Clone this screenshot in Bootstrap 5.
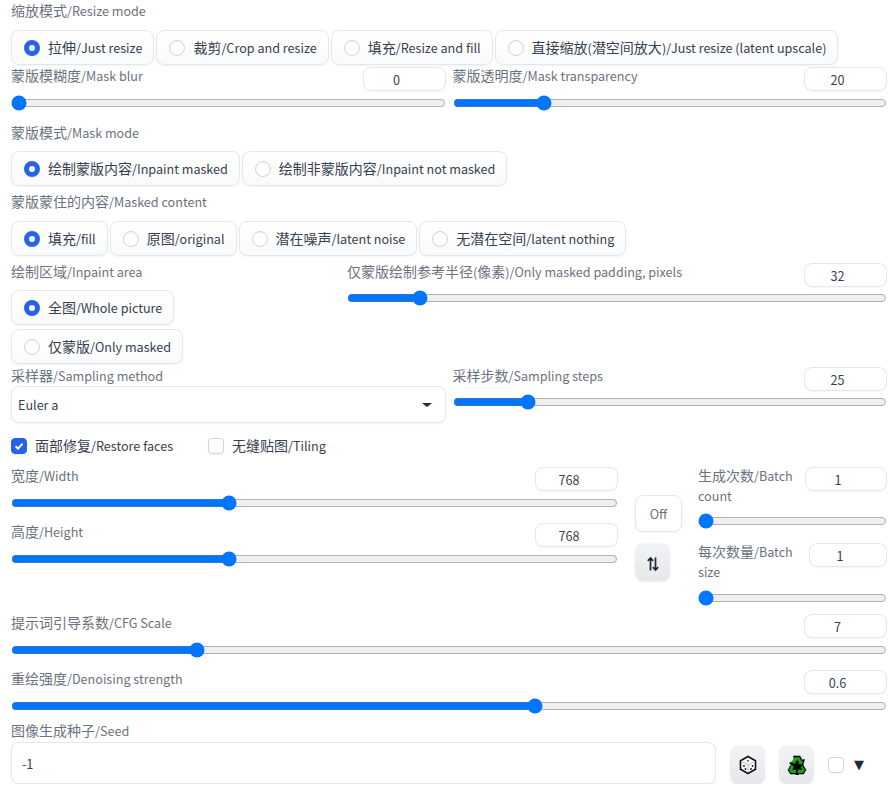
<!DOCTYPE html>
<html lang="zh">
<head>
<meta charset="utf-8">
<title>Inpaint settings</title>
<link rel="stylesheet" href="https://cdn.jsdelivr.net/npm/bootstrap@5.3.0/dist/css/bootstrap.min.css">
<style>
html,body{background:#fff;margin:0;overflow:hidden}
body{font-family:"Noto Sans CJK SC","Noto Sans",sans-serif;font-size:12.6px;line-height:20px;color:#374151}
.zh{font-size:14px;line-height:1}
.panel{padding:1px 9.5px 0 11px;width:896px}
.lbl{color:#6b7280;line-height:20px;display:block;margin:0}
.chip{display:flex;align-items:center;gap:8px;height:35px;padding:0 11px 0 12px;border:1px solid #e5e7eb;border-radius:8px;background:linear-gradient(#fff,#f9fafb);box-shadow:0 1px 2px rgba(0,0,0,.05);margin:0;white-space:nowrap;width:fit-content}
.chips{margin-top:8px}
.chips9{margin-top:9px}
.chip4{margin-top:4px}
.dot{width:16px;height:16px;border-radius:50%;border:1px solid #d1d5db;background:#fff;box-shadow:inset 0 1px 2px rgba(0,0,0,.05);flex:none;margin:0}
.dot.on{border:5px solid #2563eb}
.ml2{margin-left:2px}
.nbox{width:83px;height:24px;padding:0 12px;font-size:12.6px;line-height:20px;color:#374151;border:1px solid #e5e7eb;border-radius:8px;text-align:center;background:#fff;box-shadow:0 1px 2px rgba(0,0,0,.04);margin-top:1px;flex:none}
.sld{display:block;width:100%;height:16px;margin:4px 0 0;padding:0}
.half{width:434.5px;flex:none}
.half2{width:434px;flex:none}
.colgap{gap:7px}
.lgap{gap:8px}
.sblk{height:48px}
.sel{height:37px;border:1px solid #e5e7eb;border-radius:8px;padding:0 13px 0 6px;background:#fff;box-shadow:0 1px 2px rgba(0,0,0,.05)}
.caret{width:0;height:0;border-left:5px solid transparent;border-right:5px solid transparent;border-top:4px solid #1f2937}
.cks{height:16px;width:16px;border:1px solid #d1d5db;border-radius:4px;background:#fff;flex:none;box-shadow:0 1px 2px rgba(0,0,0,.05)}
.cks.on{background:#2563eb;border-color:#2563eb}
.offb{width:47px;height:37px;border:1px solid #e5e7eb;border-radius:8px;background:#fff;color:#6b7280;padding:0;font-size:12.6px;box-shadow:0 1px 2px rgba(0,0,0,.05)}
.toolb{width:35px;height:38px;border:0;border-radius:8px;background:linear-gradient(#f3f4f6,#e5e7eb);padding:0;box-shadow:0 1px 2px rgba(0,0,0,.08)}
.seedin{height:42px;width:705px;border:1px solid #e5e7eb;border-radius:8px;padding:0 10px;font-size:12.6px;color:#374151;background:#fff;box-shadow:0 1px 2px rgba(0,0,0,.05);flex:none}
.tri{font-size:13px;line-height:16px;color:#1f2937;font-family:"DejaVu Sans",sans-serif;margin:3px 0 0 10px}
.leftc{width:607px;flex:none}
.midc{width:47px;flex:none;padding-top:29px;gap:11px;margin-left:17px}
.rightc{width:188.5px;flex:none;margin-left:16px}
.b1{width:82px}.b2{width:78px}
.sld2{margin-top:7px}
.sld3{margin-top:8px}
.sldt{margin-top:3px}
.area-l{width:336px;flex:none}
.tb{margin:3px 0 0 14px}
.tb2{height:39px}
.rsp{margin-top:13px}
</style>
</head>
<body>
<div class="panel">
  <span class="lbl"><span class="zh">缩放模式</span>/Resize mode</span>
  <div class="chips9 d-flex">
    <label class="chip"><span class="dot on"></span><span><span class="zh">拉伸</span>/Just resize</span></label>
    <label class="chip ml2"><span class="dot"></span><span><span class="zh">裁剪</span>/Crop and resize</span></label>
    <label class="chip ml2"><span class="dot"></span><span><span class="zh">填充</span>/Resize and fill</span></label>
    <label class="chip ml2"><span class="dot"></span><span><span class="zh">直接缩放</span>(<span class="zh">潜空间放大</span>)/Just resize (latent upscale)</span></label>
  </div>

  <div class="d-flex colgap sblk" style="margin-top:1px">
    <div class="half">
      <div class="d-flex justify-content-between"><span class="lbl"><span class="zh">蒙版模糊度</span>/Mask blur</span><input class="nbox" type="number" value="0"></div>
      <input class="sld" type="range" min="0" max="64" value="0">
    </div>
    <div class="half2">
      <div class="d-flex justify-content-between"><span class="lbl"><span class="zh">蒙版透明度</span>/Mask transparency</span><input class="nbox" type="number" value="20"></div>
      <input class="sld" type="range" min="0" max="100" value="20">
    </div>
  </div>

  <span class="lbl" style="margin-top:9px"><span class="zh">蒙版模式</span>/Mask mode</span>
  <div class="chips d-flex">
    <label class="chip"><span class="dot on"></span><span><span class="zh">绘制蒙版内容</span>/Inpaint masked</span></label>
    <label class="chip ml2"><span class="dot"></span><span><span class="zh">绘制非蒙版内容</span>/Inpaint not masked</span></label>
  </div>

  <span class="lbl" style="margin-top:6px"><span class="zh">蒙版蒙住的内容</span>/Masked content</span>
  <div class="chips9 d-flex">
    <label class="chip"><span class="dot on"></span><span><span class="zh">填充</span>/fill</span></label>
    <label class="chip ml2"><span class="dot"></span><span><span class="zh">原图</span>/original</span></label>
    <label class="chip ml2"><span class="dot"></span><span><span class="zh">潜在噪声</span>/latent noise</span></label>
    <label class="chip ml2"><span class="dot"></span><span><span class="zh">无潜在空间</span>/latent nothing</span></label>
  </div>

  <div class="d-flex" style="margin-top:6px">
    <div class="area-l">
      <span class="lbl"><span class="zh">绘制区域</span>/Inpaint area</span>
      <label class="chip chips"><span class="dot on"></span><span><span class="zh">全图</span>/Whole picture</span></label>
      <label class="chip chip4"><span class="dot"></span><span><span class="zh">仅蒙版</span>/Only masked</span></label>
    </div>
    <div class="flex-grow-1">
      <div class="d-flex justify-content-between"><span class="lbl"><span class="zh">仅蒙版绘制参考半径</span>(<span class="zh">像素</span>)/Only masked padding, pixels</span><input class="nbox" type="number" value="32"></div>
      <input class="sld sldt" type="range" min="0" max="256" value="32">
    </div>
  </div>

  <div class="d-flex colgap" style="margin-top:2px">
    <div class="half">
      <span class="lbl"><span class="zh">采样器</span>/Sampling method</span>
      <div class="sel d-flex align-items-center justify-content-between"><span>Euler a</span><span class="caret"></span></div>
    </div>
    <div class="half2">
      <div class="d-flex justify-content-between"><span class="lbl"><span class="zh">采样步数</span>/Sampling steps</span><input class="nbox" type="number" value="25"></div>
      <input class="sld sldt" type="range" min="1" max="150" value="25">
    </div>
  </div>

  <div class="d-flex align-items-center" style="margin-top:13px;height:20px">
    <span class="cks on d-flex align-items-center justify-content-center"><svg width="12" height="12" viewBox="0 0 12 12"><path d="M2.500 6.200 5 8.600 9.600 3.600" fill="none" stroke="#fff" stroke-width="2"/></svg></span>
    <span class="ms-2"><span class="zh">面部修复</span>/Restore faces</span>
    <span class="cks" style="margin-left:35px"></span>
    <span class="ms-2"><span class="zh">无缝贴图</span>/Tiling</span>
  </div>

  <div class="d-flex" style="margin-top:10px">
    <div class="leftc d-flex flex-column lgap">
      <div class="sblk">
        <div class="d-flex justify-content-between"><span class="lbl"><span class="zh">宽度</span>/Width</span><input class="nbox" type="number" value="768"></div>
        <input class="sld" type="range" min="64" max="2048" value="768">
      </div>
      <div class="sblk">
        <div class="d-flex justify-content-between"><span class="lbl"><span class="zh">高度</span>/Height</span><input class="nbox" type="number" value="768"></div>
        <input class="sld" type="range" min="64" max="2048" value="768">
      </div>
    </div>
    <div class="midc d-flex flex-column align-items-start">
      <button class="offb" type="button">Off</button>
      <button class="toolb" type="button" aria-label="swap"><svg width="16" height="16" viewBox="0 0 16 16"><path d="M5.500 14.500V2M2.800 4.800 5.500 2 8.200 4.800M10.500 1.500V14M7.800 11.200 10.500 14 13.200 11.200" fill="none" stroke="#1f2937" stroke-width="1.700"/></svg></button>
    </div>
    <div class="rightc">
      <div class="d-flex justify-content-between">
        <span class="lbl"><span class="zh">生成次数</span>/Batch<br>count</span><input class="nbox b1" type="number" value="1">
      </div>
      <input class="sld sld2" type="range" min="1" max="100" value="1">
      <div class="d-flex justify-content-between rsp">
        <span class="lbl"><span class="zh">每次数量</span>/Batch<br>size</span><input class="nbox b2" type="number" value="1">
      </div>
      <input class="sld sld3" type="range" min="1" max="8" value="1">
    </div>
  </div>

  <div class="sblk" style="margin-top:7px">
    <div class="d-flex justify-content-between"><span class="lbl"><span class="zh">提示词引导系数</span>/CFG Scale</span><input class="nbox" type="number" value="7"></div>
    <input class="sld" type="range" min="1" max="30" value="7">
  </div>
  <div class="sblk" style="margin-top:8px">
    <div class="d-flex justify-content-between"><span class="lbl"><span class="zh">重绘强度</span>/Denoising strength</span><input class="nbox" type="number" value="0.6"></div>
    <input class="sld" type="range" min="0" max="1" step="0.01" value="0.6">
  </div>

  <span class="lbl" style="margin-top:4px"><span class="zh">图像生成种子</span>/Seed</span>
  <div class="d-flex align-items-center" style="margin-top:1px">
    <input class="seedin" type="number" value="-1">
    <button class="toolb tb tb2" type="button" aria-label="random"><svg width="20" height="20" viewBox="0 0 20 20"><path d="M10 1.500 17.500 5.800V14.200L10 18.500 2.500 14.200V5.800Z" fill="#fff" stroke="#111" stroke-width="1.600"/><path d="M3.500 6.500 10 10 16.500 6.500M10 10V17.500" fill="none" stroke="#bbb" stroke-width="1"/><circle cx="10" cy="5.800" r="1.100" fill="#e53935"/><circle cx="6" cy="11" r=".9" fill="#111"/><circle cx="7.500" cy="14" r=".9" fill="#111"/><circle cx="13" cy="14" r=".9" fill="#111"/><circle cx="14.500" cy="11" r=".9" fill="#111"/></svg></button>
    <button class="toolb tb tb2" type="button" aria-label="reuse"><svg width="20" height="20" viewBox="0 0 20 20"><path d="M6.500 1H13L15 5 17.500 4.500 16 10 19 15 16.500 19H11.500V20H9V19H3.500L1 15 4 9.500 2.500 8 7.500 6Z" fill="#000" stroke="#000" stroke-width=".6" stroke-linejoin="round"/><g fill="#10a810"><path d="M7.500 2.200H12.500L14.500 6 16 5.800 15 9.500 11 8.800 12.500 7.800 10 5 7.500 9 4.500 7.200Z"/><path d="M15.500 11 18 15 16 18H12.500V19.500L10 16.500 12.500 13.500V15H15.500L13.500 12Z"/><path d="M4.200 9.800 7 11.500 5.500 15H9V18H4L2 15Z"/></g></svg></button>
    <span class="cks tb"></span>
    <span class="tri">▼</span>
  </div>
</div>
</body>
</html>
